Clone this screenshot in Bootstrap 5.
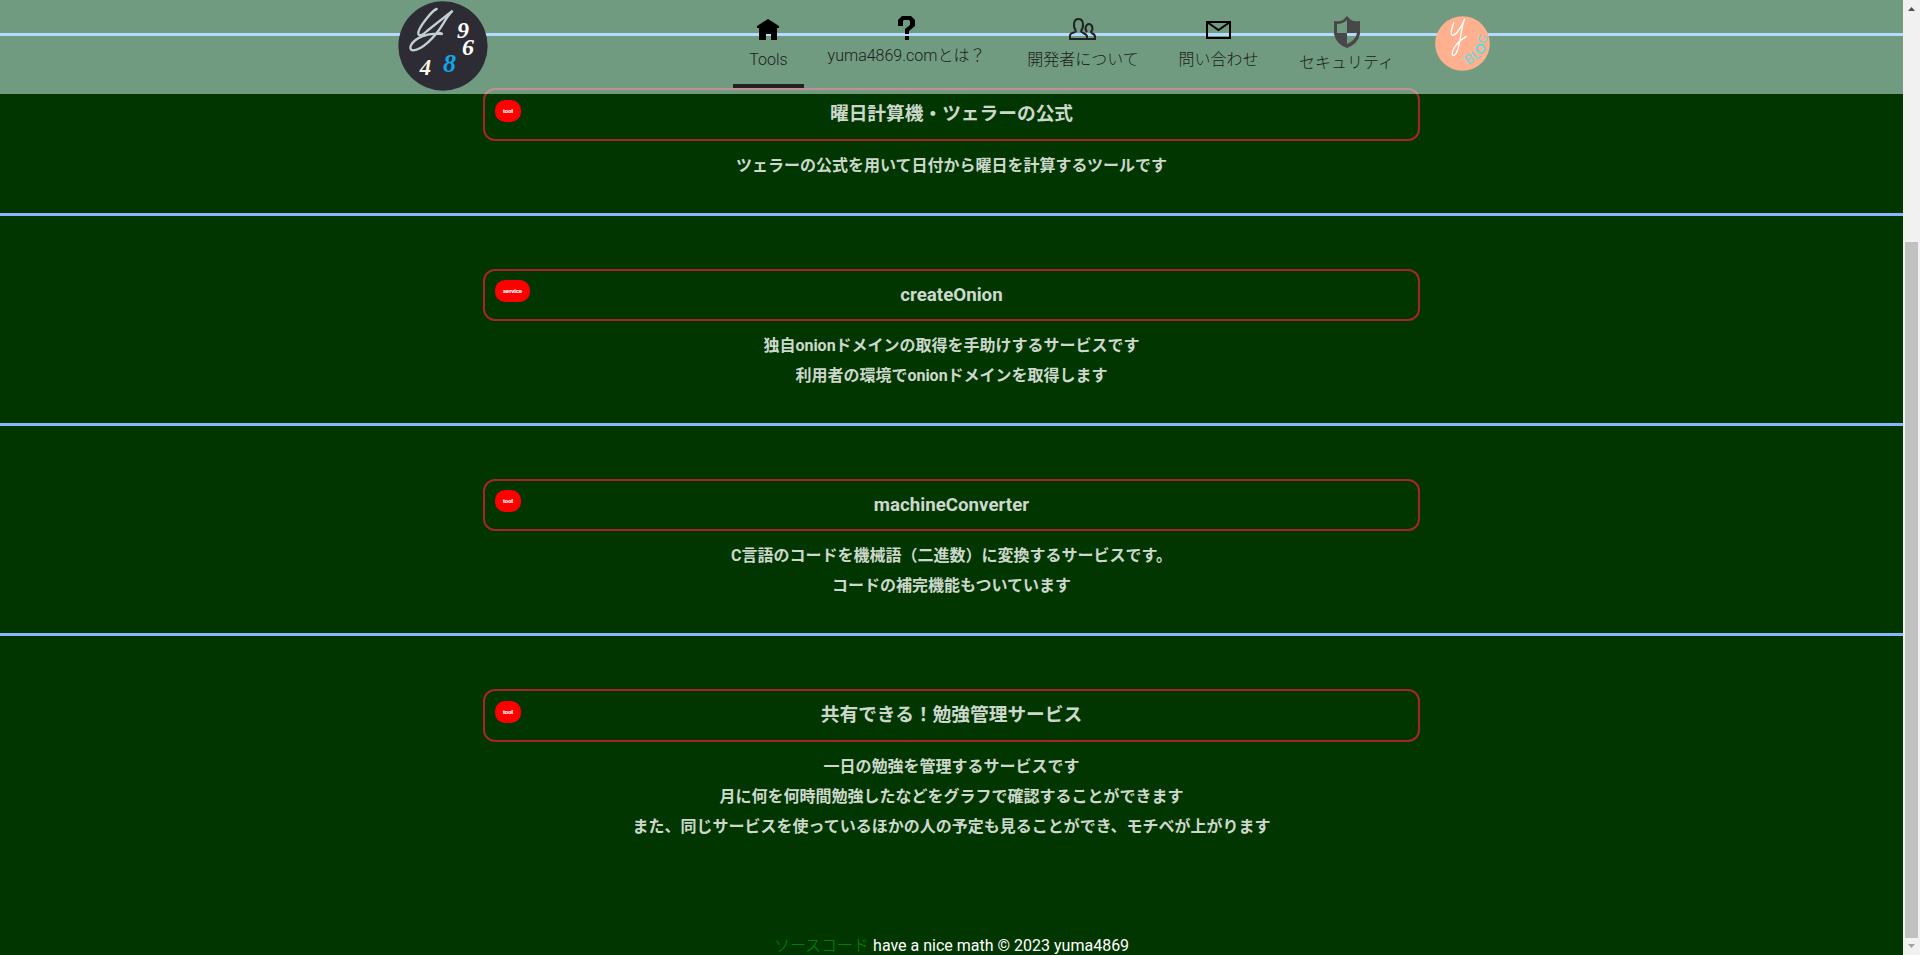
<!DOCTYPE html>
<html lang="ja">
<head>
<meta charset="utf-8">
<meta name="viewport" content="width=device-width, initial-scale=1">
<title>yuma4869.com</title>
<link rel="stylesheet" href="https://cdn.jsdelivr.net/npm/bootstrap@5.3.0/dist/css/bootstrap.min.css">
<style>
body{font-family:Roboto,"Noto Sans CJK JP",sans-serif;font-size:16px;background:#023600;color:#fff}
.page{position:relative;min-width:0}
.topbar{position:absolute;inset:0 0 auto 0;height:94px;background:rgba(222,255,255,.5);z-index:5}
.bar-inner{width:1092px;margin-left:398px}
.brand{width:90px;height:90px;margin-top:1px}
.menu{margin-left:245px}
.menu a{color:#1c1c1c;text-decoration:none;font-weight:300;height:76px;margin-top:12px;line-height:26px;white-space:nowrap}
.menu a.active{border-bottom:4px solid #222}
.menu svg{display:block;overflow:visible;margin-left:-1px}
.blog{width:55px;height:55px;margin-top:16px}
.tool-block{border-top:3px solid #8ab6ff;padding:53px 0 32px;text-align:center;font-weight:700;color:#cdd8cd}
.title-box{position:relative;width:937px;margin:0 auto 10px;height:52px;border:2px solid #a5252a;border-radius:12px;font-size:18.72px;line-height:48px}
.title-box.tall{height:53px}
.tag{position:absolute;left:10px;top:10px;height:22px;border-radius:10px;background:#f00;color:#fff;font-family:"Liberation Sans",Arial,sans-serif;font-size:5.5px;line-height:22px;font-weight:900;width:26px;-webkit-text-stroke:.2px #fff}
.title-box:not(.tall) .tag{top:9px}
.tag.wide{width:35px}
.desc{line-height:30px;margin:0}
.foot{line-height:24px;margin-top:60px}
.foot a{color:#008c00;text-decoration:none;font-weight:300}
.scroller{width:17px;background:#f1f1f1;flex:none}
.thumb{width:13px;background:#c1c1c1;margin-left:2px;height:696px}
</style>
</head>
<body class="vh-100 overflow-hidden d-flex">
<div class="page flex-grow-1 vh-100 overflow-hidden">
  <header class="topbar">
    <div class="bar-inner d-flex align-items-start">
      <svg class="brand flex-shrink-0" viewBox="54 3 270 270">
        <circle cx="189" cy="138" r="134" fill="#2d2c34"/>
        <path d="M170 27C158 30 112 85 115 102Q120 113 141 93L218 32Q205 45 190 70C165 112 125 151 98 151C84 150 90 124 126 109Q152 98 188 102Q182 99 174 98" fill="none" stroke="#c3d0d3" stroke-width="7" stroke-linecap="round"/>
        <g font-family="Liberation Serif" font-weight="bold" font-style="italic" fill="#fff">
          <text x="231" y="115" font-size="72">9</text><text x="246" y="164" font-size="72">6</text>
          <text x="119" y="224" font-size="68" fill="#fffbe6">4</text><text x="189" y="215" font-size="78" fill="#12a5e8">8</text>
        </g>
      </svg>
      <nav class="menu d-flex">
        <a href="#" class="active d-flex flex-column align-items-center" style="width:71px">
          <svg width="22" height="35" viewBox="0 -7 22 35"><path d="M11 0 22 7v2h-2v12h-6v-6H9v6H2V9H0V7z"/></svg>
          <span>Tools</span></a>
        <a href="#" class="d-flex flex-column align-items-center" style="width:205px">
          <svg width="17" height="31" viewBox="0 -4 17 31"><path d="M0 10V4l4-4h9l4 4v6l-6 5v3H7v-5l5-4V5l-1-1H6L5 5v5zM7 20h4v4H7z"/></svg>
          <span>yuma4869.comとは？</span></a>
        <a href="#" class="d-flex flex-column align-items-center" style="width:148px">
          <svg width="27" height="35" viewBox="0 -6 27 35" fill="none" stroke="#222" stroke-width="2"><path d="M7 13C4 9 4 1 9.500 1S15 9 12 13c0 2 5 2 6 5v3H1v-4c1-3 6-2 6-4M18 14C15 11 17 6 20 6s5 5 2 8c0 2 4 1 4 5v2h-8"/></svg>
          <span>開発者について</span></a>
        <a href="#" class="d-flex flex-column align-items-center" style="width:123px">
          <svg width="25" height="35" viewBox="0 -9 25 35" fill="none" stroke="#000" stroke-width="2"><path d="M1 1h23v16H1zM1 1l11.500 8L24 1"/></svg>
          <span>問い合わせ</span></a>
        <a href="#" class="d-flex flex-column align-items-center" style="width:133px">
          <svg class="ms-0" width="26" height="38" viewBox="0 -4 26 38"><path fill="#484848" fill-rule="evenodd" d="M13 0 17 4q4 2 9 1v13q-2 10-13 14Q2 28 0 18V5q5 1 9-1zM3 8v9h10V4Q9 8 3 8m10 9v11q9-4 10-11z"/></svg>
          <span>セキュリティ</span></a>
      </nav>
      <svg class="blog ms-auto flex-shrink-0" viewBox="464 48 165 165">
        <circle cx="546.500" cy="130.500" r="82" fill="#ffb08f"/>
        <path d="M520 68Q508 101 516 106C528 106 544 80 553 56Q545 78 540 114C535 148 526 169 518 166C512 162 518 134 557 110" fill="none" stroke="#fff" stroke-width="4" stroke-linecap="round"/>
        <g fill="#63dce0" font-family="Lato,sans-serif" font-size="40" text-anchor="middle">
          <text transform="translate(573 189) rotate(-31)">B</text><text transform="translate(594 175) rotate(-38)">L</text>
          <text transform="translate(611 155) rotate(-55)" font-weight="900">O</text><text transform="translate(618 122) rotate(-68)" font-size="36">G</text>
        </g>
      </svg>
    </div>
  </header>
  <main style="padding-top:33px">
    <section class="tool-block" style="padding-top:52px">
      <div class="title-box tall"><span class="tag">tool</span>曜日計算機・ツェラーの公式</div>
      <p class="desc">ツェラーの公式を用いて日付から曜日を計算するツールです</p>
    </section>
    <section class="tool-block">
      <div class="title-box"><span class="tag wide">service</span>createOnion</div>
      <p class="desc">独自onionドメインの取得を手助けするサービスです<br>利用者の環境でonionドメインを取得します</p>
    </section>
    <section class="tool-block">
      <div class="title-box"><span class="tag">tool</span>machineConverter</div>
      <p class="desc">C言語のコードを機械語（二進数）に変換するサービスです。<br>コードの補完機能もついています</p>
    </section>
    <section class="tool-block">
      <div class="title-box tall"><span class="tag">tool</span>共有できる！勉強管理サービス</div>
      <p class="desc">一日の勉強を管理するサービスです<br>月に何を何時間勉強したなどをグラフで確認することができます<br>また、同じサービスを使っているほかの人の予定も見ることができ、モチベが上がります</p>
    </section>
  </main>
  <footer class="foot text-center"><a href="#">ソースコード</a> have a nice math © 2023 yuma4869</footer>
</div>
<aside class="scroller d-flex flex-column">
  <svg width="17" height="242" viewBox="0 0 17 242"><path d="M5 11h7L8.500 7z" fill="#505050"/></svg>
  <div class="thumb"></div>
  <svg width="17" height="17"><path d="M5 6h7l-3.500 4z" fill="#a3a3a3"/></svg>
</aside>
<script src="https://cdn.jsdelivr.net/npm/bootstrap@5.3.0/dist/js/bootstrap.bundle.min.js"></script>
</body>
</html>
